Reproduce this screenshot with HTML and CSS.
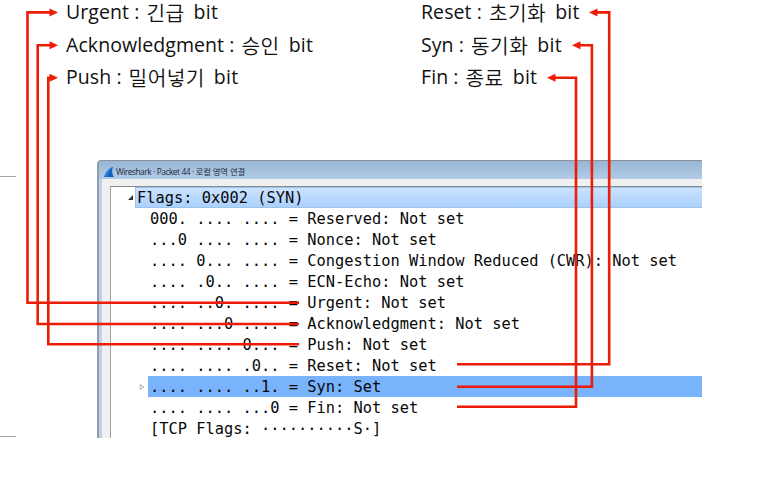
FILE: index.html
```html
<!DOCTYPE html>
<html lang="ko">
<head>
<meta charset="utf-8">
<title>TCP Flags</title>
<link rel="stylesheet" href="styles.css">
</head>
<body>
<main class="slide">
  <section class="legend">
    <ul class="legend-col">
      <li><span class="term">Urgent :</span><span class="ko">긴급</span><span class="bit">bit</span></li>
      <li><span class="term">Acknowledgment :</span><span class="ko">승인</span><span class="bit">bit</span></li>
      <li><span class="term">Push :</span><span class="ko">밀어넣기</span><span class="bit">bit</span></li>
    </ul>
    <ul class="legend-col">
      <li><span class="term">Reset :</span><span class="ko">초기화</span><span class="bit">bit</span></li>
      <li><span class="term">Syn :</span><span class="ko">동기화</span><span class="bit">bit</span></li>
      <li><span class="term">Fin :</span><span class="ko">종료</span><span class="bit">bit</span></li>
    </ul>
  </section>

  <section class="window">
    <header class="titlebar">
      <svg class="fin" viewBox="0 0 10 10"><path d="M0 10C2 5 5 1 9 0C7.5 3.500 8 7 10 10Z" fill="#1260c0"/><path d="M0 10C2 5 5 1 9 0C6 3 4 6 3.500 9Z" fill="#2c80d8"/></svg>
      <span class="title">Wireshark · Packet 44 · <span class="title-ko">로컬 영역 연결</span></span>
    </header>
    <div class="frame">
      <div class="tree">
        <div class="row root"><svg class="toggle" viewBox="0 0 5 5"><path d="M5 0V5H0Z" fill="#333"/></svg><div class="cell">Flags: 0x002 (SYN)</div></div>
        <div class="row"><div class="cell">000. .... .... = Reserved: Not set</div></div>
        <div class="row"><div class="cell">...0 .... .... = Nonce: Not set</div></div>
        <div class="row"><div class="cell">.... 0... .... = Congestion Window Reduced (CWR): Not set</div></div>
        <div class="row"><div class="cell">.... .0.. .... = ECN-Echo: Not set</div></div>
        <div class="row"><div class="cell">.... ..0. .... = Urgent: Not set</div></div>
        <div class="row"><div class="cell">.... ...0 .... = Acknowledgment: Not set</div></div>
        <div class="row"><div class="cell">.... .... 0... = Push: Not set</div></div>
        <div class="row"><div class="cell">.... .... .0.. = Reset: Not set</div></div>
        <div class="row selected"><svg class="toggle" viewBox="0 0 5 5"><path d="M1 .5L4 2.500L1 4.500Z" fill="#fff" stroke="#aaa" stroke-width=".8"/></svg><div class="cell">.... .... ..1. = Syn: Set</div></div>
        <div class="row"><div class="cell">.... .... ...0 = Fin: Not set</div></div>
        <div class="row"><div class="cell">[TCP Flags: ··········S·]</div></div>
      </div>
    </div>
  </section>

  <svg class="connectors" viewBox="0 0 781 477">
    <path class="rule" d="M0 176.500H16M0 436.500H16"/>
    <path class="wire" d="M299 302.700H27.500V12.400H51M299 324H37.700V45.200H51M299 344.300H48.300V77.700H51"/>
    <path class="wire" d="M457 364.200H609.200V12.400H596M457 386.700H591.900V45.200H579M457 406.700H576V77.700H554"/>
    <path class="head" d="M49.500 8.400L58 12.400L49.500 16.400ZM49.500 41.200L58 45.200L49.500 49.200ZM49.500 73.700L58 77.700L49.500 81.700ZM597.500 8.400L589 12.400L597.500 16.400ZM580.500 41.200L572 45.200L580.500 49.200ZM555.500 73.700L547 77.700L555.500 81.700Z"/>
  </svg>
</main>
</body>
</html>
```

FILE: styles.css
```css
* { box-sizing: border-box; }

body {
  margin: 0;
  background: #fff;
}

.slide {
  position: relative;
  width: 781px;
  height: 477px;
  overflow: hidden;
}

.legend {
  display: grid;
  grid-template-columns: 355px 300px;
  height: 160px;
  padding-left: 66px;
  font: 19.5px/24px "Open Sans", "Noto Sans CJK KR", sans-serif;
  color: #111;
}

.legend-col {
  margin: 0;
  padding: 0;
  list-style: none;
}

.legend-col li {
  display: flex;
  height: 32.600px;
  white-space: nowrap;
}

.term { letter-spacing: 0.08px; }

.ko {
  margin: 0 9px 0 7px;
  font-family: "Noto Sans CJK KR", sans-serif;
  font-size: 20.300px;
  font-weight: 350;
  letter-spacing: 0.4px;
}

.bit { letter-spacing: 0.3px; }

.window {
  width: 605px;
  height: 278px;
  margin-left: 97px;
  display: flex;
  flex-direction: column;
  border-top: 1px solid #8b9197;
  border-left: 2px solid #919dab;
  border-top-left-radius: 4px;
  background: #bdd2ea;
}

.titlebar {
  display: flex;
  align-items: center;
  gap: 2px;
  height: 18px;
  padding: 4px 0 0 5px;
  border-top-left-radius: 3px;
  background: linear-gradient(#98b5d3, #b2cce8);
}

.fin {
  width: 10px;
  height: 10px;
}

.title {
  font: 8.400px/12px "Open Sans", "Noto Sans CJK KR", sans-serif;
  letter-spacing: -0.500px;
  word-spacing: 0.300px;
  color: #1d2a3a;
  white-space: nowrap;
}

.title-ko {
  letter-spacing: -0.250px;
}

.frame {
  flex: 1;
  min-height: 0;
  margin-left: 3px;
  padding: 7px 0 0 8px;
  background: #f0f0f0;
}

.tree {
  height: 252px;
  border-top: 1px solid #858b90;
  border-left: 1px solid #a0a0a0;
  background: #fff;
  font: 15.360px/23px "DejaVu Sans Mono", monospace;
  color: #080808;
}

.row {
  display: flex;
  align-items: center;
  height: 21px;
  padding-left: 37px;
}

.cell {
  flex: 1;
  height: 21px;
  padding-left: 2px;
  white-space: pre;
}

.toggle {
  width: 5px;
  height: 5px;
  margin-right: 2px;
}

.root { padding-left: 17px; }

.root .cell {
  border: 1px solid #9cc4e8;
  border-width: 1px 0 1px 1px;
  padding-left: 1px;
  line-height: 20px;
  background: linear-gradient(#cbe3ff, #aad0fd);
}

.selected { padding-left: 28px; }

.selected .toggle {
  width: 6px;
  height: 6px;
  margin-right: 3px;
}

.selected .cell { background: #78b3fb; }

.connectors {
  position: absolute;
  inset: 0;
  width: 781px;
  height: 477px;
}

.wire {
  fill: none;
  stroke: #ec1c06;
  stroke-width: 2.600;
}

.head { fill: #f01c06; }

.rule {
  fill: none;
  stroke: #a6a6a6;
  stroke-width: 1;
}
```
